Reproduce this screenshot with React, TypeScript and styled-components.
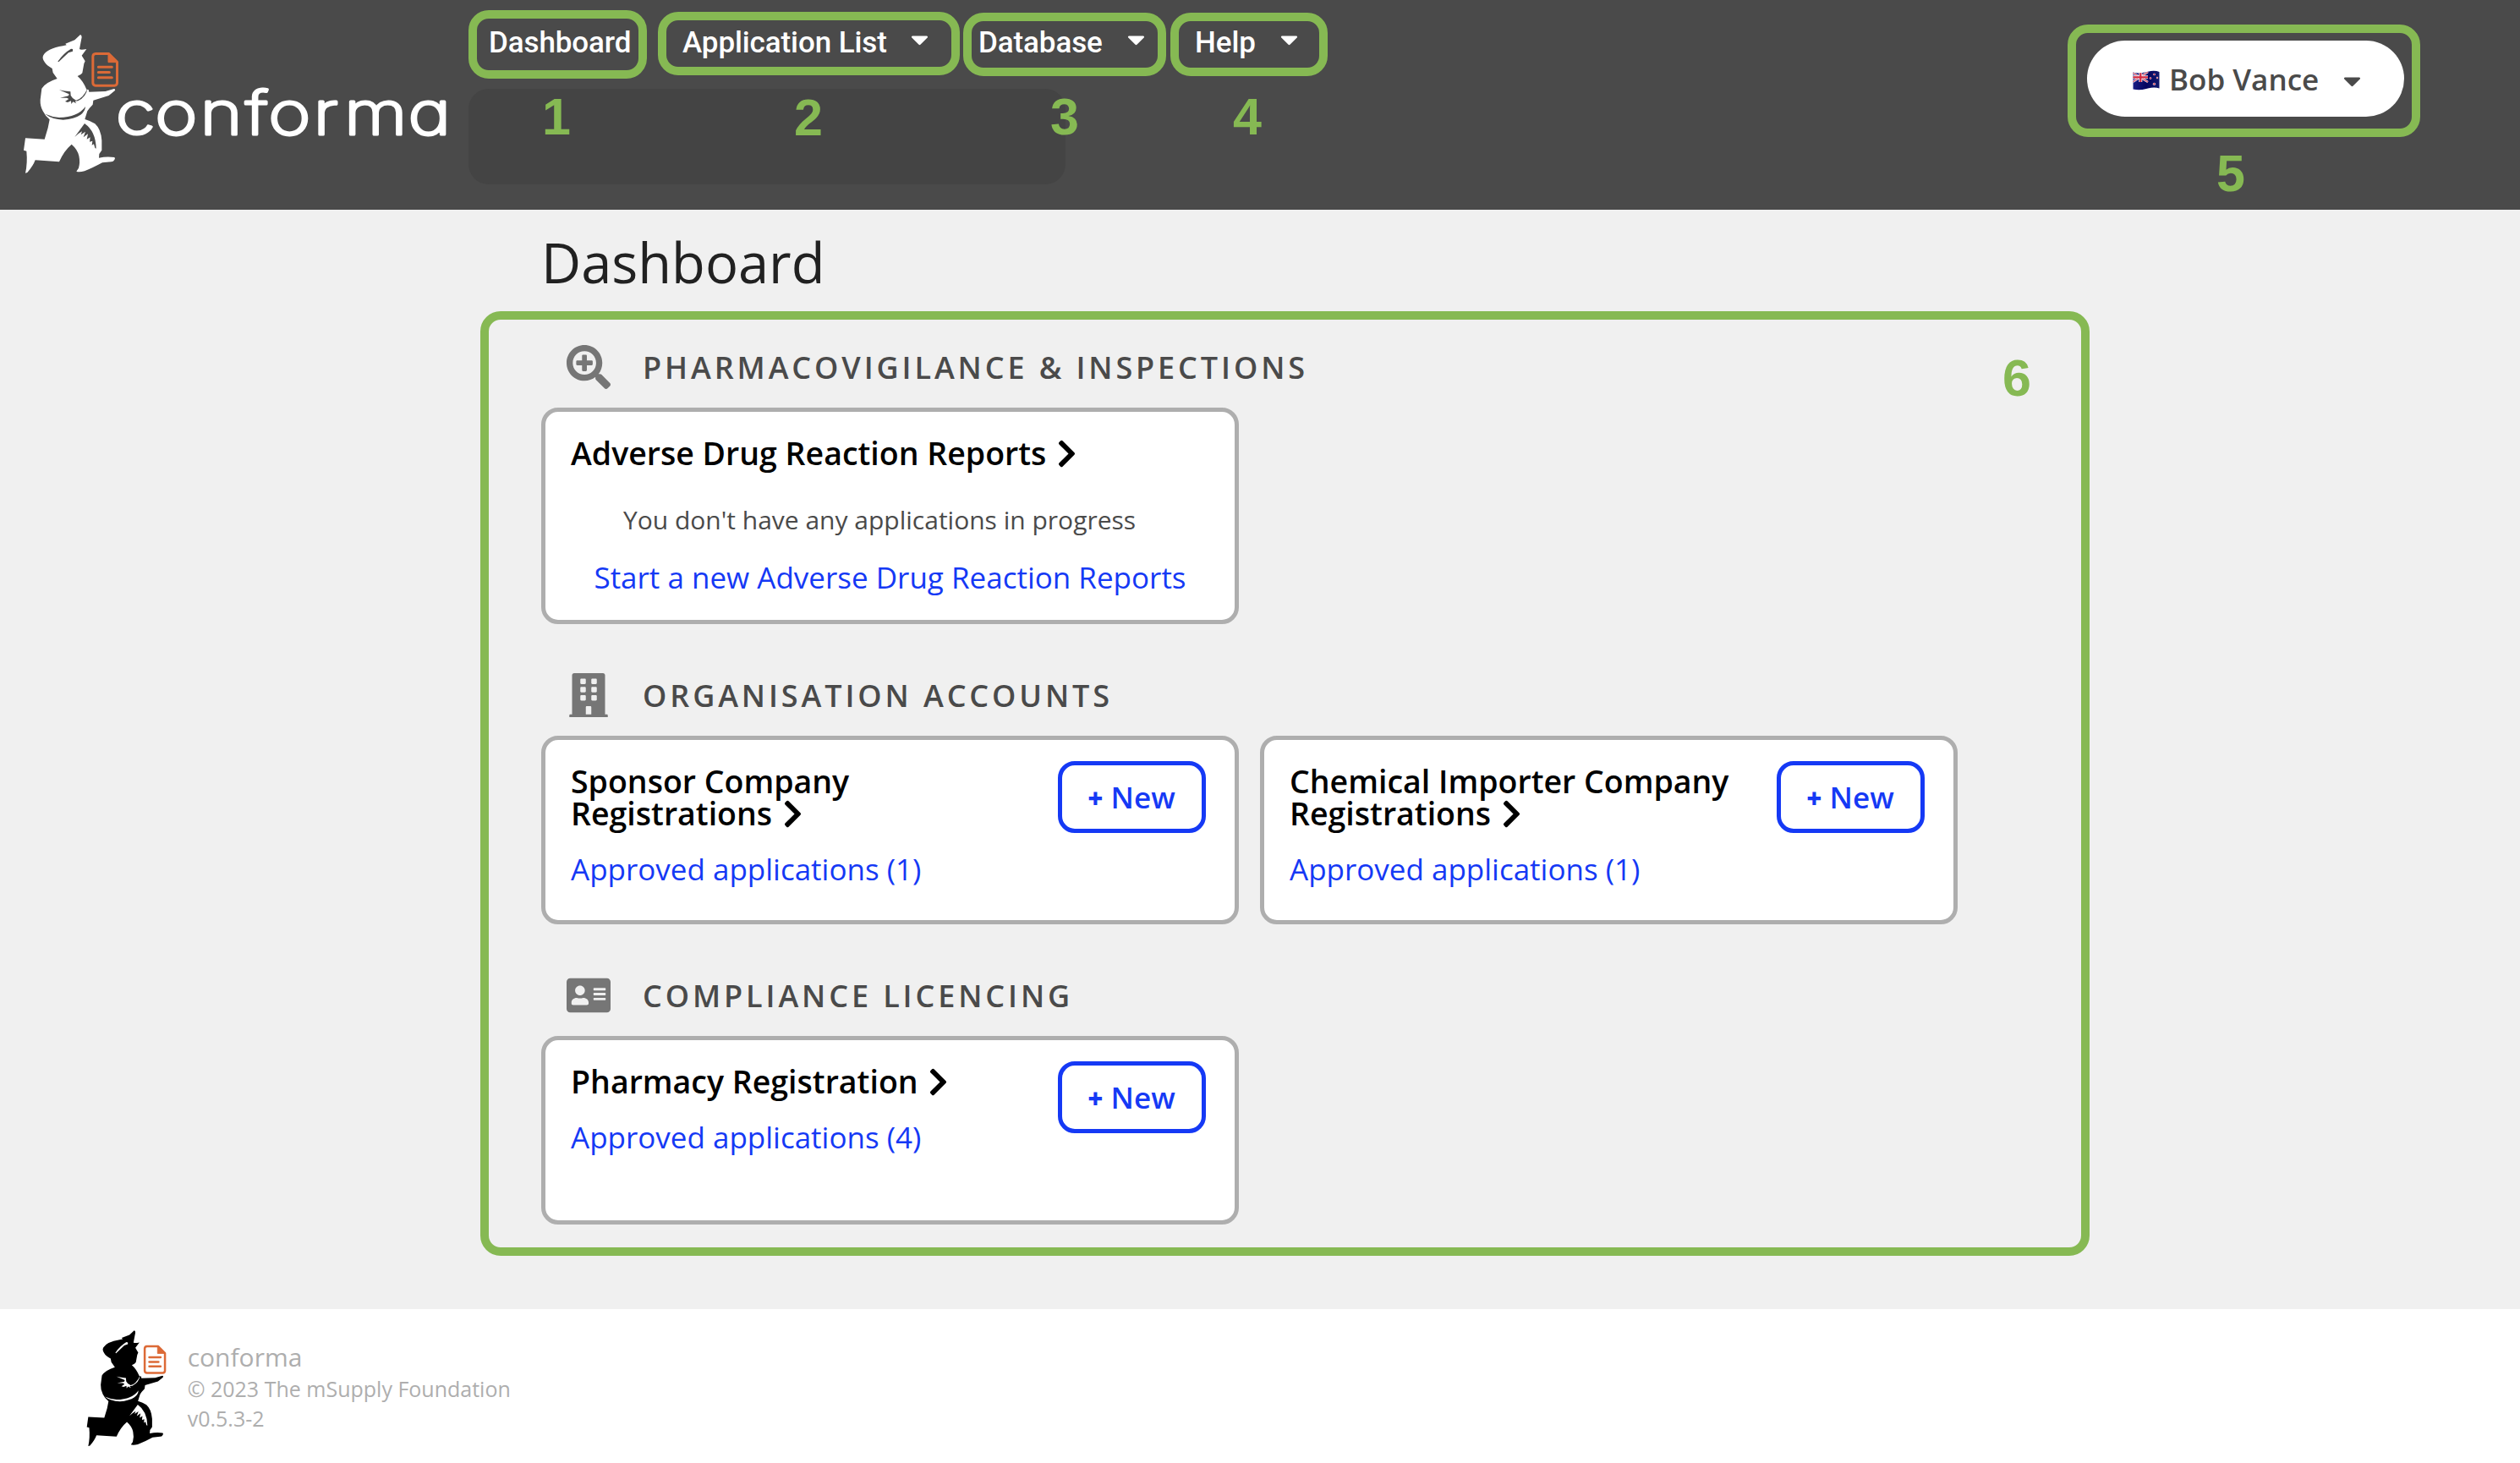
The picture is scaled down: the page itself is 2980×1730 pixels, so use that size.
import React from "react";
import styled, { createGlobalStyle } from "styled-components";
import { FaAddressCard, FaBuilding, FaCaretDown, FaChevronRight, FaSearchPlus } from "react-icons/fa";

const GREEN = "#86b953";
const DARK = "#4a4a4a";
const BLUE = "#1539f5";
const GREY = "#aeaeae";

const GlobalStyle = createGlobalStyle`
  * { box-sizing: border-box; }
  body { margin: 0; background: #ffffff; font-family: "Open Sans", "Noto Sans", sans-serif; }
`;

const Page = styled.div`
  width: 2980px;
  height: 1730px;
  display: flex;
  flex-direction: column;
  overflow: hidden;
`;

/* ---------- header ---------- */

const Header = styled.header`
  height: 248px;
  flex: none;
  display: flex;
  align-items: flex-start;
  background: ${DARK};
`;

const Brand = styled.div`
  width: 554px;
  height: 248px;
  flex: none;
  display: flex;
  align-items: flex-start;
  padding: 36px 0 0 20px;
`;

const WordmarkSvg = styled.svg`
  flex: none;
  margin-left: -20px;
  margin-top: 44px;
  overflow: visible;
`;

const NavColumn = styled.div`
  width: 1016px;
  display: flex;
  flex-direction: column;
`;

const NavRow = styled.nav`
  display: flex;
  align-items: flex-start;
  height: 105px;
`;

const NavItem = styled.div<{ $w: number; $h: number; $top: number; $left: number; $pad: number; $lift: number }>`
  position: relative;
  display: flex;
  width: ${(p) => p.$w}px;
  height: ${(p) => p.$h}px;
  margin: ${(p) => p.$top}px 0 0 ${(p) => p.$left}px;
  padding: ${(p) => p.$lift}px 0 0 ${(p) => p.$pad}px;
  border: 10px solid ${GREEN};
  border-radius: 24px;
`;

const NavLabel = styled.span`
  font: 500 35px/42px Roboto, sans-serif;
  letter-spacing: -0.1px;
  color: #ffffff;
  white-space: nowrap;
`;

const Caret = styled(FaCaretDown)<{ $gap: number; $top: number }>`
  flex: none;
  width: 21px;
  height: 33px;
  margin-left: ${(p) => p.$gap}px;
  margin-top: ${(p) => p.$top}px;
`;

const Marker = styled.span<{ $x: number; $y: number }>`
  position: absolute;
  left: ${(p) => p.$x}px;
  top: ${(p) => p.$y}px;
  width: 60px;
  text-align: center;
  font: bold 61px/60px "Liberation Sans", Arial, sans-serif;
  color: ${GREEN};
`;

const SubPanel = styled.div`
  width: 706px;
  height: 113px;
  border-radius: 24px;
  background: #444444;
`;

const UserFrame = styled.div`
  position: relative;
  width: 417px;
  height: 133px;
  margin: 29px 118px 0 auto;
  padding: 9px 0 0 13px;
  border: 10px solid ${GREEN};
  border-radius: 24px;
`;

const UserButton = styled.div`
  display: flex;
  align-items: center;
  width: 375px;
  height: 90px;
  padding-left: 54px;
  border-radius: 45px;
  background: #ffffff;
  color: ${DARK};
`;

const UserName = styled.span`
  margin-left: 11px;
  padding-top: 1px;
  font: 600 35px/50px "Open Sans", sans-serif;
  white-space: nowrap;
`;

/* ---------- body ---------- */

const Main = styled.main`
  flex: none;
  height: 1300px;
  padding: 22px 509px 0 568px;
  background: #f0f0f0;
`;

const Title = styled.h1`
  margin: 0 0 18px 72px;
  font: 400 65px/80px "Open Sans", sans-serif;
  color: #212121;
`;

const Board = styled.div`
  position: relative;
  width: 1903px;
  height: 1117px;
  padding: 8px 62px 0;
  border: 10px solid ${GREEN};
  border-radius: 24px;
`;

const Section = styled.section`
  & + & { margin-top: 36px; }
`;

const SectionHead = styled.div`
  display: flex;
  align-items: center;
  height: 96px;
  padding-left: 26px;
  gap: 34px;
`;

const IconSlot = styled.span`
  display: flex;
  justify-content: center;
  width: 60px;
  color: #767676;
`;

const SectionTitle = styled.h2`
  margin: 0;
  padding-top: 2px;
  font: 600 36px/50px "Open Sans", sans-serif;
  letter-spacing: 3.9px;
  color: ${DARK};
  white-space: nowrap;
`;

const Cards = styled.div`
  display: flex;
  gap: 25px;
`;

const Card = styled.article<{ $h: number }>`
  width: 825px;
  height: ${(p) => p.$h}px;
  padding: 25px 34px 0 30px;
  border: 5px solid ${GREY};
  border-radius: 20px;
  background: #ffffff;
  display: flex;
  gap: 30px;
  align-items: flex-start;
`;

const CardBody = styled.div`
  flex: 1;
  min-width: 0;
  padding-top: 5px;
  display: flex;
  flex-direction: column;
`;

const CardTitle = styled.h3`
  margin: 0;
  font: 600 37.5px/38.3px "Open Sans", sans-serif;
  color: #000000;
`;

const Chevron = styled(FaChevronRight)`
  width: 23px;
  height: 37px;
  margin: -6px 0 -6px 3px;
  vertical-align: 1px;
`;

const CardLink = styled.a<{ $center?: boolean }>`
  margin-top: ${(p) => (p.$center ? 23 : 21.6)}px;
  margin-right: ${(p) => (p.$center ? -4 : 0)}px;
  font: 400 35px/50px "Open Sans", sans-serif;
  color: ${BLUE};
  white-space: nowrap;
  text-align: ${(p) => (p.$center ? "center" : "left")};
`;

const EmptyNote = styled.p`
  margin: 40px 21px 0 0;
  font: 400 30px/40px "Open Sans", sans-serif;
  color: ${DARK};
  text-align: center;
  white-space: nowrap;
`;

const NewButton = styled.button`
  flex: none;
  width: 175px;
  height: 85px;
  padding: 1px 1px 0 0;
  border: 5px solid ${BLUE};
  border-radius: 20px;
  background: #ffffff;
  font: 600 35px/50px "Open Sans", sans-serif;
  color: ${BLUE};
`;

const Plus = styled.span`
  font-size: 31px;
  font-weight: 800;
`;

/* ---------- footer ---------- */

const Footer = styled.footer`
  flex: none;
  height: 182px;
  display: flex;
  align-items: flex-start;
  padding: 21px 0 0 96px;
  background: #ffffff;
`;

const FooterText = styled.div`
  margin: 16px 0 0 17px;
  color: ${GREY};
`;

const FooterName = styled.div`
  font: 400 30px/40px "Open Sans", sans-serif;
`;

const FooterLine = styled.div`
  font: 400 25px/35px "Open Sans", sans-serif;
`;

/* Running figure carrying a document; `ink` is the figure, `paper` the details cut out of it. */
function Runner({ width, ink, paper }: { width: number; ink: string; paper: string }) {
  return (
    <svg width={width} height={(width * 525) / 390} viewBox="0 0 390 525" style={{ flex: "none" }}>
      <path
        fill={ink}
        d="M225 15 Q230 16 230 24 L222 66 Q226 70 247 66 L230 89 L242 109 L238 118 L232 151 Q228 158 215 162 Q234 178 247 209 L254 210 L256 218 L314 216 L345 207 Q351 209 347 214 L326 231 L271 248 L269 263 Q256 276 250 286 L241 315 Q262 321 277 331 Q298 350 301 390 L301 425 L292 438 L291 452 Q318 446 346 450 Q350 453 346 459 Q342 466 335 466 L303 469 Q268 488 240 499 Q220 504 211 500 L219 488 Q225 468 220 445 Q215 422 194 404 Q166 428 150 466 L65 460 Q58 480 37 504 L30 506 Q38 470 34 428 L24 425 L30 382 L98 386 L110 346 L116 316 Q100 303 92 286 Q82 268 83 246 L88 206 Q102 184 143 171 L128 150 L125 135 Q105 124 98 112 Q88 98 94 88 Q108 64 163 55 L176 52 L172 47 L205 34 Z"
      />
      <g fill={paper}>
        <path d="M145 110 Q166 80 192 65 L198 66 L198 74 L183 79 L148 112 Z" />
        <path d="M150 211 Q168 216 190 217 L191 231 Q197 243 210 248 Q233 243 250 207 Q246 235 217 250 L206 251 L211 259 L199 253 L193 261 L192 250 L180 255 L171 252 L184 243 L177 239 L153 239 L183 232 L185 226 Z" />
        <path d="M100 296 Q122 306 150 309 Q216 308 243 270 Q242 287 226 299 Q204 314 164 317 Q124 315 100 296 Z" />
        <path d="M205 378 L240 330 Q280 358 281 419 L277 417 L273 403 L266 407 L268 392 L258 395 L260 379 L248 386 L252 367 L236 379 L243 359 L227 370 L231 358 Q220 364 205 378 Z" />
      </g>
      <g fill="none" stroke="#dc6a37" strokeLinecap="round" strokeLinejoin="round">
        <path strokeWidth="9" d="M326 82.500 H279 Q270 83 269.500 92 V186 Q270 195 279 195.500 H346 Q355 195 355.500 186 V112 Z" />
        <path strokeWidth="3" fill="#dc6a37" d="M324 84 V113 H356 Z" />
        <path strokeWidth="9" d="M289 129.500 H337 M289 148.500 H328 M289 167.500 H337" />
      </g>
    </svg>
  );
}

/* Left edge of each letter of "conforma". */
const LETTER_X = [136.7, 183.2, 236.5, 290, 317.3, 370.5, 407, 482.5];
const STRETCH = 1.19;

function Wordmark() {
  return (
    <WordmarkSvg width={400} height={90} viewBox="130 80 400 90">
      <text
        transform={`scale(${STRETCH} 1)`}
        x={LETTER_X.map((x) => (x / STRETCH).toFixed(2)).join(" ")}
        y="159.500"
        fontFamily="Inter, sans-serif"
        fontSize="72"
        fontWeight="200"
        fill="#fff"
        stroke="#fff"
        strokeWidth="3.100"
        strokeLinejoin="round"
        style={{ fontFeatureSettings: '"cv11"' }}
      >
        conforma
      </text>
    </WordmarkSvg>
  );
}

const Star = ({ x, y, r }: { x: number; y: number; r: number }) => (
  <g>
    <circle cx={x} cy={y} r={r} fill="#e9e9f5" />
    <circle cx={x} cy={y} r={r * 0.68} fill="#d5263b" />
  </g>
);

function Flag() {
  return (
    <svg width="32" height="24" viewBox="0 0 32 24" style={{ flex: "none", marginTop: 4 }}>
      <defs>
        <clipPath id="wave">
          <path d="M0.500 2.500 Q8 4.500 16 2.300 Q25 -0.500 31.500 2 V21.500 Q25 19.500 16 22 Q8 24.200 0.500 22.500 Z" />
        </clipPath>
        <linearGradient id="shade" x1="0" x2="1" y1="0" y2="0">
          <stop offset="0" stopColor="#1a1f86" />
          <stop offset="0.500" stopColor="#04035f" />
          <stop offset="1" stopColor="#141a6e" />
        </linearGradient>
      </defs>
      <g clipPath="url(#wave)">
        <rect width="32" height="24" fill="url(#shade)" />
        <path d="M0 3 L18 14 M18 2 L0 14" stroke="#eceaf4" strokeWidth="2.600" />
        <path d="M0 3 L18 14 M18 2 L0 14" stroke="#d5263b" strokeWidth="1" />
        <path d="M9.300 2 V14 M0 8.300 H18" stroke="#eceaf4" strokeWidth="4" />
        <path d="M9.300 2 V14 M0 8.300 H18" stroke="#d5263b" strokeWidth="2.200" />
        <Star x={25.500} y={5} r={1.300} />
        <Star x={21} y={9.500} r={1.300} />
        <Star x={29} y={9} r={1.200} />
        <Star x={25.500} y={16.300} r={1.600} />
      </g>
    </svg>
  );
}

function AppCard({ title, approved }: { title: string; approved: number }) {
  return (
    <Card $h={223}>
      <CardBody>
        <CardTitle>
          {title} <Chevron />
        </CardTitle>
        <CardLink>Approved applications ({approved})</CardLink>
      </CardBody>
      <NewButton>
        <Plus>+</Plus> New
      </NewButton>
    </Card>
  );
}

export default function App() {
  return (
    <Page>
      <GlobalStyle />
      <Header>
        <Brand>
          <Runner width={130} ink="#ffffff" paper={DARK} />
          <Wordmark />
        </Brand>
        <NavColumn>
          <NavRow>
            <NavItem $w={211} $h={81} $top={12} $left={0} $pad={14} $lift={8}>
              <NavLabel>Dashboard</NavLabel>
              <Marker $x={64} $y={86}>1</Marker>
            </NavItem>
            <NavItem $w={357} $h={75} $top={14} $left={13} $pad={19} $lift={6}>
              <NavLabel>Application List</NavLabel>
              <Caret $gap={28} $top={0} color="#fff" />
              <Marker $x={138} $y={85}>2</Marker>
            </NavItem>
            <NavItem $w={240} $h={75} $top={15} $left={4} $pad={8} $lift={5}>
              <NavLabel>Database</NavLabel>
              <Caret $gap={29} $top={0} color="#fff" />
              <Marker $x={80} $y={83}>3</Marker>
            </NavItem>
            <NavItem $w={186} $h={75} $top={15} $left={5} $pad={19} $lift={5}>
              <NavLabel>Help</NavLabel>
              <Caret $gap={29} $top={0} color="#fff" />
              <Marker $x={51} $y={83}>4</Marker>
            </NavItem>
          </NavRow>
          <SubPanel />
        </NavColumn>
        <UserFrame>
          <UserButton>
            <Flag />
            <UserName>Bob Vance</UserName>
            <Caret $gap={29} $top={4} color={DARK} />
          </UserButton>
          <Marker $x={153} $y={136}>5</Marker>
        </UserFrame>
      </Header>

      <Main>
        <Title>Dashboard</Title>
        <Board>
          <Marker $x={1777} $y={39}>6</Marker>
          <Section>
            <SectionHead>
              <IconSlot><FaSearchPlus size={52} /></IconSlot>
              <SectionTitle>PHARMACOVIGILANCE &amp; INSPECTIONS</SectionTitle>
            </SectionHead>
            <Cards>
              <Card $h={256}>
                <CardBody>
                  <CardTitle>
                    Adverse Drug Reaction Reports <Chevron />
                  </CardTitle>
                  <EmptyNote>You don't have any applications in progress</EmptyNote>
                  <CardLink $center>Start a new Adverse Drug Reaction Reports</CardLink>
                </CardBody>
              </Card>
            </Cards>
          </Section>
          <Section>
            <SectionHead>
              <IconSlot><FaBuilding size={52} /></IconSlot>
              <SectionTitle>ORGANISATION ACCOUNTS</SectionTitle>
            </SectionHead>
            <Cards>
              <AppCard title="Sponsor Company Registrations" approved={1} />
              <AppCard title="Chemical Importer Company Registrations" approved={1} />
            </Cards>
          </Section>
          <Section>
            <SectionHead>
              <IconSlot><FaAddressCard size={52} /></IconSlot>
              <SectionTitle>COMPLIANCE LICENCING</SectionTitle>
            </SectionHead>
            <Cards>
              <AppCard title="Pharmacy Registration" approved={4} />
            </Cards>
          </Section>
        </Board>
      </Main>

      <Footer>
        <Runner width={108.7} ink="#000000" paper="#ffffff" />
        <FooterText>
          <FooterName>conforma</FooterName>
          <FooterLine>© 2023 The mSupply Foundation</FooterLine>
          <FooterLine>v0.5.3-2</FooterLine>
        </FooterText>
      </Footer>
    </Page>
  );
}
